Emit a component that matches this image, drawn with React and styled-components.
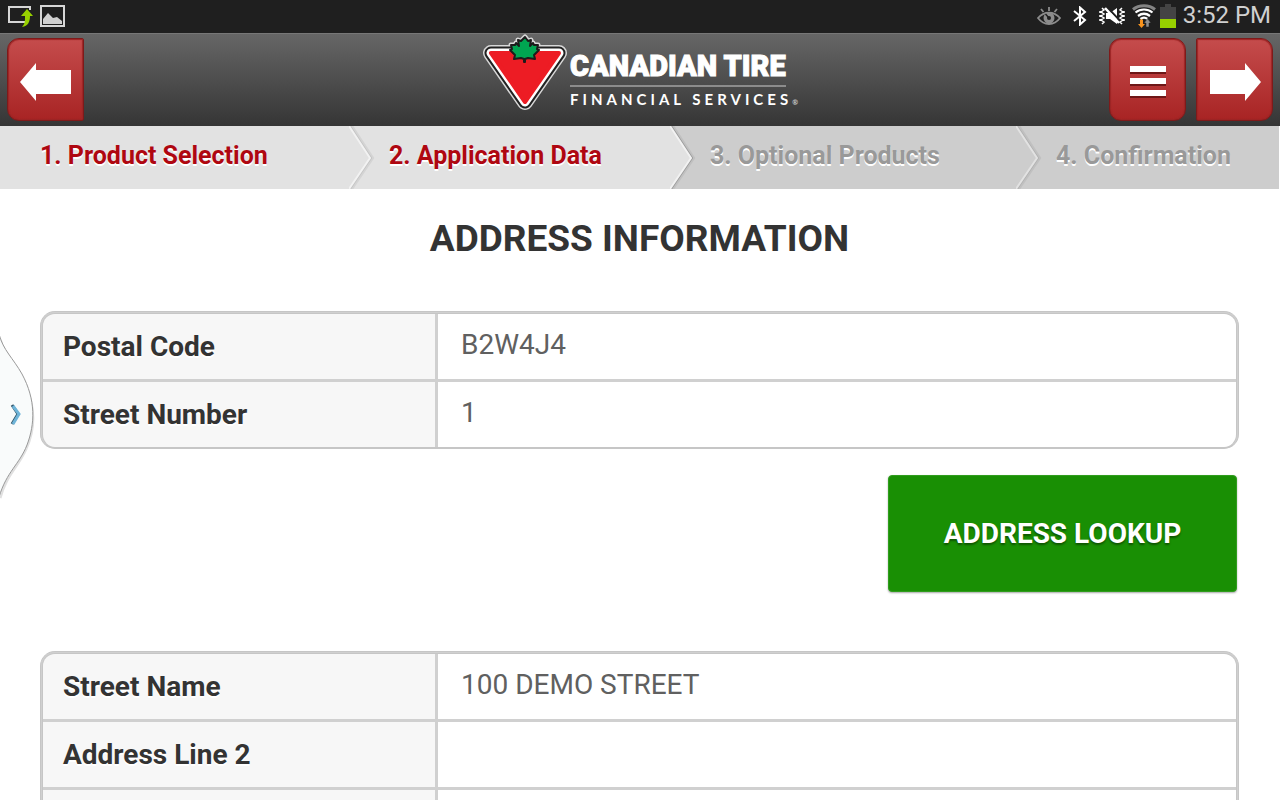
import React from "react";
import styled, { createGlobalStyle } from "styled-components";

const Global = createGlobalStyle`
  * { box-sizing: border-box; }
  body { margin: 0; background: #fff; font-family: Roboto, "Liberation Sans", sans-serif; color: #333; }
  button { font: inherit; cursor: pointer; }
`;

const Screen = styled.div`
  position: relative;
  display: flex;
  flex-direction: column;
  height: 100vh;
  overflow: hidden;
`;

const StatusBar = styled.div`
  display: flex;
  align-items: center;
  justify-content: space-between;
  flex: none;
  height: 33px;
  padding: 0 9px 2px 8px;
  background: #1f1f1f;
`;

const StatusGroup = styled.div`
  display: flex;
  align-items: center;
  gap: ${(p) => p.$gap}px;
  svg { display: block; }
`;

const Clock = styled.time`
  font-size: 24px;
  line-height: 31px;
  color: #d0d0d0;
`;

const Header = styled.header`
  display: grid;
  grid-template-columns: 1fr auto 1fr;
  flex: none;
  height: 93px;
  background: linear-gradient(#666, #353535);
  border-top: 1px solid #777;
`;

const HeaderSide = styled.div`
  display: flex;
  gap: 10px;
  padding: 4px 7px;
  justify-content: ${(p) => p.$align};
`;

const RedButton = styled.button`
  display: flex;
  align-items: center;
  justify-content: center;
  width: 77px;
  height: 83px;
  padding: 4px 0 0;
  border: 1px solid #7e1a1a;
  border-radius: ${(p) => p.$radius};
  background: linear-gradient(#c54c4c, #a82424);
  box-shadow: inset 0 0 1px 1px #9c2525;
`;

const Brand = styled.div`
  display: flex;
  align-items: flex-start;
  gap: 2px;
  color: #fff;
`;

const BrandText = styled.div`
  display: flex;
  flex-direction: column;
  align-items: flex-start;
  padding-top: 14px;
`;

const BrandName = styled.span`
  font: 900 29px/37px Roboto, sans-serif;
  -webkit-text-stroke: 1px #fff;
  white-space: nowrap;
  border-bottom: 2px solid #8c8c8c;
`;

const BrandSub = styled.span`
  font: bold 15px/24px Lato, sans-serif;
  letter-spacing: 4px;
  white-space: nowrap;
  sup {
    font-size: 7px;
    line-height: 7px;
    letter-spacing: 0;
    vertical-align: baseline;
    color: #ccc;
  }
`;

const Steps = styled.nav`
  display: grid;
  grid-template-columns: 349fr 321fr 346fr 263fr;
  flex: none;
  height: 63px;
  border-right: 1px solid #fff;
`;

const Step = styled.div`
  position: relative;
  padding: 13px 0 0 40px;
  background: ${(p) => (p.$active ? "#e2e2e2" : "#cdcdcd")};
  color: ${(p) => (p.$active ? "#af0711" : "#999")};
  font-size: 25px;
  font-weight: 700;
  line-height: 34px;
  white-space: nowrap;
  text-shadow: 0 2px 0 #fff;
`;

const Chevron = styled.svg`
  position: absolute;
  z-index: 1;
  top: 0;
  left: 100%;
`;

const Main = styled.main`
  flex: 1;
  min-height: 0;
  padding: 28px 41px 0 40px;
`;

const Title = styled.h1`
  margin: 0;
  font-size: 37px;
  font-weight: 700;
  line-height: 44px;
  text-align: center;
`;

const Fields = styled.div`
  display: grid;
  gap: 3px;
  margin-top: ${(p) => p.$top}px;
  border: 3px double #c6c6c6;
  border-bottom-width: 2px;
  border-radius: 15px;
  background: #d0d0d0;
  overflow: hidden;
`;

const Row = styled.div`
  display: grid;
  grid-template-columns: 392px 1fr;
  gap: 3px;
  height: 65px;
`;

const Label = styled.label`
  padding-left: 20px;
  background: #f7f7f7;
  font-size: 28px;
  font-weight: 700;
  line-height: 65px;
  text-shadow: 0 2px 0 #fff;
`;

const Input = styled.input`
  width: 100%;
  min-width: 0;
  padding: 0 23px 4px;
  border: 0;
  outline: 0;
  border-radius: 0;
  background: #fff;
  color: #606060;
  font: 400 28px/34px Roboto, sans-serif;
`;

const Actions = styled.div`
  display: flex;
  justify-content: flex-end;
  padding: 26px 2px 0;
`;

const LookupButton = styled.button`
  width: 349px;
  height: 117px;
  border: 1px solid #2f9d1d;
  border-radius: 4px;
  background: #198f04;
  color: #fff;
  font-size: 28px;
  font-weight: 700;
  text-shadow: 0 2px 2px rgba(0, 0, 0, 0.4);
  box-shadow: 0 1px 2px rgba(0, 0, 0, 0.35);
`;

const DrawerHandle = styled.button`
  position: absolute;
  left: 0;
  top: 330px;
  width: 38px;
  height: 172px;
  padding: 0;
  border: 0;
  background: none;
  svg { display: block; }
`;

const ScreenOutIcon = () => (
  <svg width="26" height="24" viewBox="0 0 26 24">
    <path d="M22 6V3H1v15h16" fill="none" stroke="#d6d6d6" strokeWidth="2" />
    <path d="M19 5l6 7h-3c0 6-2 10-8 11 3-3 3-6 3-11h-4z" fill="#97d000" />
  </svg>
);

const PictureIcon = () => (
  <svg width="25" height="22" viewBox="0 0 25 22">
    <rect x="1" y="1" width="23" height="20" fill="none" stroke="#d6d6d6" strokeWidth="2" />
    <path d="M3 19v-5l5-6 5 5 4-1 5 4v3z" fill="#d0d0d0" />
  </svg>
);

const EyeIcon = () => (
  <svg width="24" height="20" viewBox="0 0 24 20" fill="none" stroke="#8c8c8c">
    <path d="M1 12c6-7 16-7 22 0-6 8-16 8-22 0z" strokeWidth="1.8" />
    <circle cx="12" cy="12" r="5.5" fill="#8c8c8c" stroke="none" />
    <circle cx="12" cy="12" r="2" fill="#1f1f1f" stroke="none" />
    <path d="M12 12L8.500 8" stroke="#1f1f1f" strokeWidth="1.500" />
    <path d="M12 1v4M4 3l2.500 3M20 3l-2.500 3" strokeWidth="1.800" />
  </svg>
);

const BluetoothIcon = () => (
  <svg width="14" height="20" viewBox="0 0 14 20" fill="none" stroke="#fff" strokeWidth="2">
    <path d="M1 5l11 9-5 4.500V1.500L12 6 1 15" />
  </svg>
);

const MuteVibrateIcon = () => (
  <svg width="26" height="20" viewBox="0 0 26 20">
    <path d="M7 7h4l7-5v16l-7-5H7z" fill="#fff" />
    <path d="M8 1l15 16" stroke="#1f1f1f" strokeWidth="2" />
    <path d="M6 2l14 15" stroke="#fff" strokeWidth="2.500" />
    <path d="M3 2l2 2-3 2 3 2-3 2 3 2-3 2 3 2-2 2M1 5v2M1 9v2M1 13v2M23 2l-2 2 3 2-3 2 3 2-3 2 3 2-3 2 2 2M25 5v2M25 9v2M25 13v2" fill="none" stroke="#fff" strokeWidth="1.500" />
  </svg>
);

const WifiIcon = () => (
  <svg width="24" height="24" viewBox="0 0 24 24" fill="none">
    <path d="M1 5.500c6-5 16-5 22 0" stroke="#858585" strokeWidth="3" />
    <path d="M3.500 8.500c5-4 12-4 17 0M6 12c4-3 8-3 12 0M8.500 15c2-1.500 5-1.500 7 0" stroke="#fff" strokeWidth="2.200" />
    <path d="M8 15.500h3V20h2l-3.500 4L6 20h2z" fill="#f7931e" />
    <path d="M14 23v-4h-2l3.500-4.500L19 19h-2v4z" fill="#8f8f8f" stroke="#1f1f1f" strokeWidth="0.500" />
  </svg>
);

const BatteryIcon = () => (
  <svg width="16" height="24" viewBox="0 0 16 24">
    <path d="M5 0h6v3h5v21H0V3h5z" fill="#444" />
    <path d="M0 15h16v9H0z" fill="#97d000" />
  </svg>
);

const ArrowIcon = ({ flip }) => (
  <svg width="52" height="38" viewBox="0 0 52 38">
    <path
      d={flip ? "M0 19L16 0v7h35v24H16v7z" : "M52 19L36 0v7H1v24h35v7z"}
      fill="#fff"
    />
  </svg>
);

const MenuIcon = () => (
  <svg width="38" height="34" viewBox="0 0 38 34">
    <path d="M1 3h36v6H1zM1 15h36v6H1zM1 27h36v6H1z" fill="#6e1717" />
    <path d="M1 1h36v6H1zM1 13h36v6H1zM1 25h36v6H1z" fill="#fff" />
  </svg>
);

const LEAF =
  "M43 3l3 4 3-1-1 6 3-3 1 2h4l-1 4 2 1-5 5 1 4-7-1-3 1v3h-1v-3l-3-1-7 1 1-4-5-5 2-1-1-4h4l1-2 3 3-1-6 3 1z";
const TRIANGLE = "M9 19h68L43 68z";

const TriangleLogo = () => (
  <svg width="86" height="80" viewBox="0 0 86 80">
    <g strokeLinejoin="round">
      <path d={TRIANGLE} fill="#d8d8d8" stroke="#d8d8d8" strokeWidth="16" />
      <path d={LEAF} fill="none" stroke="#d8d8d8" strokeWidth="5" />
      <path d={TRIANGLE} fill="#222" stroke="#222" strokeWidth="13" />
      <path d={TRIANGLE} fill="#fff" stroke="#fff" strokeWidth="9" />
      <path d={TRIANGLE} fill="#ed1c24" stroke="#ed1c24" strokeWidth="4" />
      <path d={LEAF} fill="#00a551" stroke="#1b1b1b" strokeWidth="2" />
    </g>
  </svg>
);

const StepChevron = ({ active, last }) => (
  <Chevron width="26" height="63" viewBox="0 0 26 63" aria-hidden="true">
    <path d="M2 0l21 32L2 63" fill="none" stroke="#000" strokeOpacity="0.06" strokeWidth="4" />
    <path d="M1 0l21 32L1 63" fill="none" stroke="#000" strokeOpacity={last ? 0.2 : 0.08} strokeWidth="2" />
    <path d="M-1 0h1l21 32L0 63h-1z" fill={active ? "#e2e2e2" : "#cdcdcd"} />
    <path d="M0 0l21 32L0 63" fill="none" stroke={active ? "#f2f2f2" : "#e2e2e2"} strokeWidth="2" />
  </Chevron>
);

const STEPS = [
  { text: "1. Product Selection", active: true },
  { text: "2. Application Data", active: true, last: true },
  { text: "3. Optional Products", active: false },
  { text: "4. Confirmation", active: false },
];

const Field = ({ id, label, value }) => (
  <Row>
    <Label htmlFor={id}>{label}</Label>
    <Input id={id} type="text" defaultValue={value} />
  </Row>
);

export default function App() {
  return (
    <Screen>
      <Global />
      <StatusBar>
        <StatusGroup $gap={6}>
          <ScreenOutIcon />
          <PictureIcon />
        </StatusGroup>
        <StatusGroup $gap={7}>
          <StatusGroup $gap={12}>
            <EyeIcon />
            <BluetoothIcon />
            <MuteVibrateIcon />
          </StatusGroup>
          <StatusGroup $gap={4}>
            <WifiIcon />
            <BatteryIcon />
          </StatusGroup>
          <Clock>3:52 PM</Clock>
        </StatusGroup>
      </StatusBar>

      <Header>
        <HeaderSide $align="flex-start">
          <RedButton $radius="12px 2px 2px 12px" aria-label="Back">
            <ArrowIcon flip />
          </RedButton>
        </HeaderSide>
        <Brand>
          <TriangleLogo />
          <BrandText>
            <BrandName>CANADIAN TIRE</BrandName>
            <BrandSub>
              FINANCIAL SERVICES<sup>®</sup>
            </BrandSub>
          </BrandText>
        </Brand>
        <HeaderSide $align="flex-end">
          <RedButton $radius="12px" aria-label="Menu">
            <MenuIcon />
          </RedButton>
          <RedButton $radius="2px 12px 12px 2px" aria-label="Next">
            <ArrowIcon />
          </RedButton>
        </HeaderSide>
      </Header>

      <Steps aria-label="Application steps">
        {STEPS.map((s, i) => (
          <Step key={s.text} $active={s.active}>
            {s.text}
            {i < STEPS.length - 1 && <StepChevron active={s.active} last={s.last} />}
          </Step>
        ))}
      </Steps>

      <Main>
        <Title>ADDRESS INFORMATION</Title>
        <Fields $top={50}>
          <Field id="postal" label="Postal Code" value="B2W4J4" />
          <Field id="number" label="Street Number" value="1" />
        </Fields>
        <Actions>
          <LookupButton type="button">ADDRESS LOOKUP</LookupButton>
        </Actions>
        <Fields $top={59}>
          <Field id="street" label="Street Name" value="100 DEMO STREET" />
          <Field id="line2" label="Address Line 2" value="" />
          <Row>
            <Label htmlFor="city" />
            <Input id="city" type="text" aria-label="City" />
          </Row>
        </Fields>
      </Main>

      <DrawerHandle aria-label="Open side panel">
        <svg width="38" height="172" viewBox="0 0 38 172">
          <path d="M0 9c4 16 14 24 22 40 14 26 14 48 4 70-8 18-20 26-26 49" fill="none" stroke="#000" strokeOpacity="0.12" strokeWidth="3" />
          <path d="M-1 4c4 16 14 24 23 40 14 26 13 50 5 71-8 20-20 26-28 52z" fill="#f9fbfb" stroke="#999" />
          <path d="M12 75l6 9-6 10" fill="none" stroke="#33566a" strokeWidth="3" />
          <path d="M13 76l6 8-6 10" fill="none" stroke="#6fb4d8" strokeWidth="3" />
        </svg>
      </DrawerHandle>
    </Screen>
  );
}
